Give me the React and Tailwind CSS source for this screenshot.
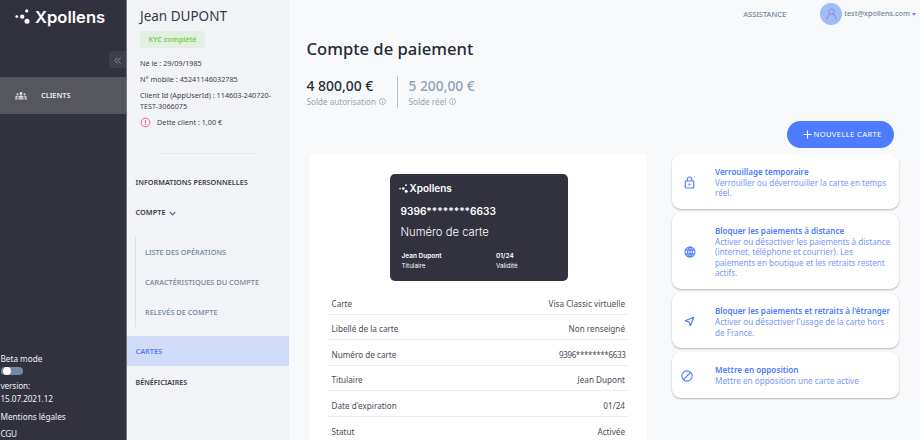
import React from "react";

function Dots({ className }) {
  return (
    <svg className={className} viewBox="0 0 15 15" fill="#fff">
      <circle cx="1.8" cy="7.6" r="1.4" />
      <circle cx="7.2" cy="7.6" r="2.2" />
      <circle cx="11.7" cy="1.9" r="1.6" />
      <circle cx="12" cy="12.2" r="2.5" />
    </svg>
  );
}

function Info() {
  return (
    <svg className="size-[7px]" viewBox="0 0 14 14" fill="none" stroke="#8d9fb1" strokeWidth="1.4">
      <circle cx="7" cy="7" r="6" />
      <path d="M7 6v4.6M7 3.2v1.6" />
    </svg>
  );
}

function Sidebar() {
  return (
    <aside className="flex w-[127px] shrink-0 flex-col border-r border-[#77777f] bg-[#32323e] text-white">
      <div className="flex h-[51px] items-start pt-[7px] pl-[15px]">
        <Dots className="mt-[1.500px] size-[15px] shrink-0" />
        <span className="ml-[5px] font-['Inter'] text-[16.6px] leading-[20px] font-semibold">Xpollens</span>
      </div>
      <div className="flex h-[26px] justify-end">
        <div className="flex h-[17px] w-[17px] items-center justify-center rounded-l-[3px] bg-[#3f3f4b] pt-[2px]">
          <svg className="size-[7px]" viewBox="0 0 14 14" fill="none" stroke="#9a9aa4" strokeWidth="1.7">
            <path d="M7 1L2 7l5 6M13 1L8 7l5 6" />
          </svg>
        </div>
      </div>
      <div className="flex h-[37px] items-center bg-[#56565e] pl-[15px] text-[#efeff1]">
        <svg className="size-[12px]" viewBox="0 0 24 16" fill="#dedee2">
          <circle cx="12" cy="3" r="2.8" />
          <circle cx="5" cy="4.5" r="2" />
          <circle cx="19" cy="4.5" r="2" />
          <path d="M6.8 15V10.500c0-2 2-3.300 5.200-3.300s5.200 1.300 5.200 3.300V15zM.5 15v-4.500c0-2 2-3.200 5.800-3-1 1-1.300 2-1.300 3V15zM23.500 15v-4.500c0-2-2-3.200-5.800-3 1 1 1.300 2 1.300 3V15z" />
          <path d="M0 11.800h24" stroke="#56565e" strokeWidth="1" />
        </svg>
        <span className="ml-[14px] text-[7.400px] font-semibold tracking-[-0.050px]">CLIENTS</span>
      </div>
      <div className="mt-auto flex h-[88px] flex-col text-[8.200px] leading-[13px] text-[#f0f0f2]">
        <span className="pl-[0.500px]">Beta mode</span>
        <span className="mt-[2px] ml-[0.500px] flex h-[11px] w-[22px] items-center rounded-full bg-[#7389a1] pl-[2px]">
          <span className="size-[8px] rounded-full bg-white" />
        </span>
        <span className="mt-[4px] pl-[0.500px] tracking-[-0.100px]">version:</span>
        <span className="pl-[0.500px] tracking-[-0.080px]">15.07.2021.12</span>
        <span className="mt-[5px] pl-[0.500px]">Mentions légales</span>
        <span className="mt-[4px] pl-[0.500px] tracking-[-0.200px]">CGU</span>
      </div>
    </aside>
  );
}

function ClientPanel() {
  return (
    <section className="flex w-[162px] shrink-0 flex-col bg-[#f2f3f6] text-[7.250px] text-[#3d414d]">
      <div className="flex h-[153px] flex-col pl-[13px] whitespace-nowrap">
        <h2 className="mt-[6px] text-[13.500px] leading-[20px] text-[#353845]">Jean DUPONT</h2>
        <span className="mt-[5px] flex h-[17px] w-[65px] items-center justify-center rounded-[3px] bg-[#e2efe2] text-[7.200px] font-semibold text-[#74d14c]">
          KYC complété
        </span>
        <span className="mt-[10px] leading-[11px]">Né le : 29/09/1985</span>
        <span className="mt-[5px] leading-[11px]">N° mobile : 45241146032785</span>
        <span className="mt-[5px] leading-[10.500px]">
          Client Id (AppUserId) : 114603-240720-
          <br />
          TEST-3066075
        </span>
        <span className="mt-[6px] flex items-center leading-[11px]">
          <svg className="size-[11px]" viewBox="0 0 22 22" fill="none" stroke="#f25b93" strokeWidth="2">
            <circle cx="11" cy="11" r="8.700" />
            <path d="M11 6v6.500M11 14.300v2.200" />
          </svg>
          <span className="ml-[6px]">Dette client : 1,00 €</span>
        </span>
      </div>
      <div className="mx-auto h-px w-[96px] bg-[#e6e7ea]" />
      <nav className="flex flex-col font-semibold whitespace-nowrap text-[#3a3d49]">
        <span className="mt-[13px] flex h-[30px] items-center pl-[8.500px]">INFORMATIONS PERSONNELLES</span>
        <span className="flex h-[30px] items-center pt-[2px] pl-[8.500px] text-[7.360px]">
          COMPTE
          <svg className="ml-[3px] h-[5px] w-[7px]" viewBox="0 0 14 10" fill="none" stroke="#63788e" strokeWidth="2.600">
            <path d="M1.500 2L7 7.500 12.500 2" />
          </svg>
        </span>
        <div className="mt-[9px] mb-[9px] ml-[8px] flex h-[91px] flex-col border-l border-[#dddfe3] pt-[1px] pl-[9px] font-medium text-[#73879b]">
          <span className="flex h-[30.500px] items-center text-[7.300px]">LISTE DES OPÉRATIONS</span>
          <span className="flex h-[30.500px] items-center text-[7.400px]">CARACTÉRISTIQUES DU COMPTE</span>
          <span className="flex h-[30px] items-center text-[7.360px]">RELEVÉS DE COMPTE</span>
        </div>
        <span className="flex h-[30px] items-center bg-[#d0dbf8] pl-[8.500px] text-[7.300px] text-[#4d7cfe]">CARTES</span>
        <span className="flex h-[32px] items-center pt-[1px] pl-[8.500px] text-[7.100px]">BÉNÉFICIAIRES</span>
      </nav>
    </section>
  );
}

const rows = [
  ["Carte", "Visa Classic virtuelle"],
  ["Libellé de la carte", "Non renseigné"],
  ["Numéro de carte", "9396********6633"],
  ["Titulaire", "Jean Dupont"],
  ["Date d'expiration", "01/24"],
  ["Statut", "Activée"],
];

function CardPanel() {
  return (
    <div className="flex h-[287px] w-[337px] shrink-0 flex-col overflow-hidden rounded-t-[4px] bg-white">
      <div className="mt-[19.500px] ml-[79.500px] flex h-[107px] w-[178px] shrink-0 flex-col rounded-[5px] bg-[#32323e] font-['Inter'] whitespace-nowrap text-white">
        <div className="mt-[8px] ml-[9px] flex items-center">
          <Dots className="size-[9px]" />
          <span className="ml-[2px] text-[10px] leading-[13px] font-semibold">Xpollens</span>
        </div>
        <span className="mt-[9.500px] ml-[11px] text-[10.150px] leading-[15px] font-semibold">9396********6633</span>
        <span className="mt-[5px] ml-[11px] text-[11.250px] leading-[16px] font-light">Numéro de carte</span>
        <div className="mt-[11px] ml-[12px] flex text-[6.300px] leading-[10px]">
          <div className="flex w-[94.500px] flex-col">
            <span className="text-[6.500px] font-semibold">Jean Dupont</span>
            <span>Titulaire</span>
          </div>
          <div className="flex flex-col">
            <span className="text-[6.500px] font-semibold">01/24</span>
            <span>Validité</span>
          </div>
        </div>
      </div>
      <div className="mt-[8.500px] ml-[18px] flex w-[300px] flex-col text-[8.170px] text-[#4a4d57]">
        {rows.map(([label, value]) => (
          <div key={label} className="flex h-[25.600px] shrink-0 items-center justify-between border-b border-[#ebecee] pt-[5px] pr-[3px] pl-[3.500px]">
            <span>{label}</span>
            <span className={value.includes("*") ? "-mr-[0.400px] text-[8.100px] tracking-[-0.390px]" : ""}>{value}</span>
          </div>
        ))}
      </div>
    </div>
  );
}

function Action({ className, icon, title, children }) {
  return (
    <div className={"flex shrink-0 items-center rounded-[9px] bg-white shadow-[0_1px_2px_rgba(0,0,0,0.28)] " + className}>
      <div className="flex w-[43px] shrink-0 items-center">{icon}</div>
      <div className="flex flex-col text-[8.130px] leading-[10.200px] whitespace-nowrap text-[#7898f8]">
        <span className="mb-[1px] text-[8.020px] leading-[11px] font-semibold text-[#4d7cfe]">{title}</span>
        {children}
      </div>
    </div>
  );
}

function Actions() {
  return (
    <div className="ml-[25px] flex w-[227px] flex-col gap-[4px]">
      <Action
        className="h-[55px] pt-[1px]"
        title="Verrouillage temporaire"
        icon={
          <svg className="ml-[12px] h-[13px] w-[11px]" viewBox="0 0 22 26" fill="none" stroke="#4d7cfe" strokeWidth="2.400">
            <rect x="2.500" y="10" width="17" height="14" rx="1.500" />
            <path d="M6.500 10V6.500a4.500 4.500 0 0 1 9 0V10" />
            <circle cx="11" cy="17" r="2" fill="#4d7cfe" stroke="none" />
          </svg>
        }
      >
        <span>Verrouiller ou déverrouiller la carte en temps</span>
        <span>réel.</span>
      </Action>
      <Action
        className="h-[76px] pt-[1px]"
        title="Bloquer les paiements à distance"
        icon={
          <svg className="ml-[12px] size-[12px]" viewBox="0 0 24 24" fill="none" stroke="#4d7cfe" strokeWidth="2.200">
            <circle cx="12" cy="12" r="10" />
            <ellipse cx="12" cy="12" rx="4.700" ry="10" />
            <path d="M2.500 8.300h19M2.500 15.700h19M12 2v20" />
          </svg>
        }
      >
        <span>Activer ou désactiver les paiements à distance</span>
        <span>(internet, téléphone et courrier). Les</span>
        <span>paiements en boutique et les retraits restent</span>
        <span>actifs.</span>
      </Action>
      <Action
        className="h-[55px] pt-[2px]"
        title="Bloquer les paiements et retraits à l'étranger"
        icon={
          <svg className="ml-[12px] size-[11px]" viewBox="0 0 22 22" fill="none" stroke="#4d7cfe" strokeWidth="2.500" strokeLinejoin="round">
            <path d="M19.500 2.500L2.500 9.500l7.500 2.500 2.700 7.500z" />
          </svg>
        }
      >
        <span>Activer ou désactiver l'usage de la carte hors</span>
        <span>de France.</span>
      </Action>
      <Action
        className="h-[46px] pt-[1px]"
        title={<span className="text-[8.130px]">Mettre en opposition</span>}
        icon={
          <svg className="ml-[9px] size-[12px]" viewBox="0 0 24 24" fill="none" stroke="#4d7cfe" strokeWidth="2.200">
            <circle cx="12" cy="12" r="10.300" />
            <path d="M5 19L19 5" />
          </svg>
        }
      >
        <span className="text-[8.200px]">Mettre en opposition une carte active</span>
      </Action>
    </div>
  );
}

export default function App() {
  return (
    <div className="flex h-[440px] w-[920px] overflow-hidden bg-[#f8f9fb] font-['Noto_Sans','Open_Sans',sans-serif]">
      <Sidebar />
      <ClientPanel />
      <main className="flex min-w-0 flex-1 flex-col whitespace-nowrap">
        <header className="flex h-[28px] shrink-0 items-center justify-end pr-[4px] text-[#73849a]">
          <span className="mr-[34px] pt-[1px] text-[7.450px] font-medium">ASSISTANCE</span>
          <span className="flex size-[22px] items-center justify-center rounded-full bg-[#a3bafb]">
            <svg className="h-[12px] w-[11px]" viewBox="0 0 22 24" fill="none" stroke="#7489b5" strokeWidth="1.700">
              <circle cx="11" cy="7.500" r="5.500" />
              <path d="M1.500 23c.5-6 3.500-9 6.500-10.500M20.500 23c-.5-6-3.500-9-6.500-10.500" />
            </svg>
          </span>
          <span className="ml-[2px] text-[7.400px] font-medium tracking-[-0.060px]">test@xpollens.com</span>
          <svg className="ml-[2px] h-[3px] w-[4px]" viewBox="0 0 4 3" fill="#4d7cfe">
            <path d="M0 0h4L2 2.700z" />
          </svg>
        </header>
        <div className="flex h-[93px] shrink-0 flex-col pl-[17.500px]">
          <h1 className="mt-[9px] text-[16.600px] leading-[24px] font-medium text-[#272a33]">Compte de paiement</h1>
          <div className="mt-[15px] flex h-[32px]">
            <div className="flex w-[91px] flex-col border-r border-[#b4c3d1]">
              <span className="text-[13.900px] leading-[19px] font-medium text-[#272a38]">4 800,00 €</span>
              <span className="flex items-center gap-[3px] text-[8.130px] leading-[13px] text-[#94a4b5]">
                Solde autorisation <Info />
              </span>
            </div>
            <div className="flex flex-col pl-[11px]">
              <span className="text-[13.800px] leading-[19px] font-medium text-[#8fa2b4]">5 200,00 €</span>
              <span className="flex items-center gap-[3px] text-[8.200px] leading-[13px] text-[#94a4b5]">
                Solde réel <Info />
              </span>
            </div>
          </div>
        </div>
        <div className="flex h-[33px] shrink-0 items-start justify-end pr-[26px]">
          <button className="flex h-[27px] w-[107px] items-center rounded-full bg-[#4d7cfe] pl-[15.500px] text-white">
            <svg className="size-[9px]" viewBox="0 0 9 9" stroke="#fff" strokeWidth="1.100">
              <path d="M4.500 .5v8M.5 4.500h8" />
            </svg>
            <span className="ml-[2px] text-[7.600px] font-normal tracking-[0.370px]">NOUVELLE CARTE</span>
          </button>
        </div>
        <div className="flex pl-[21px]">
          <CardPanel />
          <Actions />
        </div>
      </main>
    </div>
  );
}
